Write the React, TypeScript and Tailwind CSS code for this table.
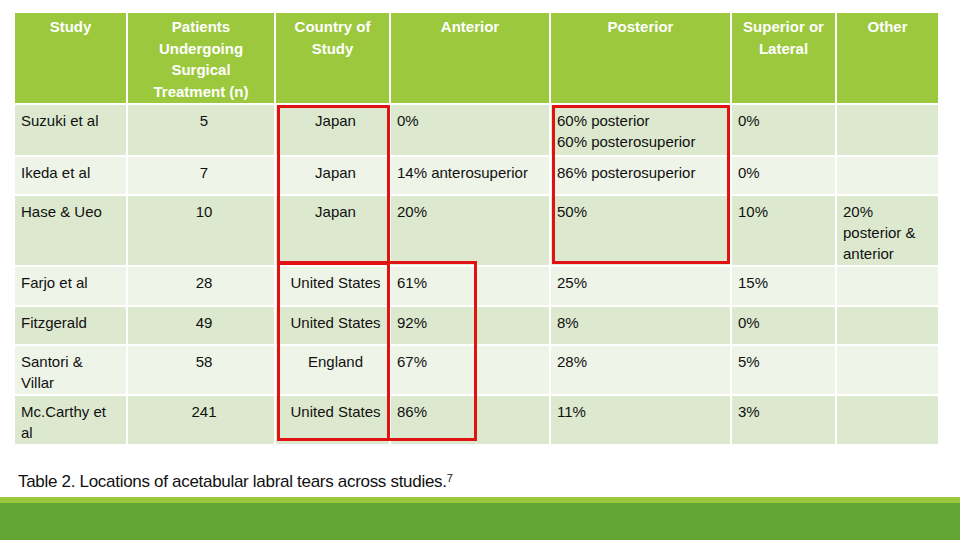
import React from "react";

type Row = {
  study: string;
  n: string;
  country: string;
  anterior: string;
  posterior: string;
  superior: string;
  other: string;
};

const rows: Row[] = [
  { study: "Suzuki et al", n: "5", country: "Japan", anterior: "0%", posterior: "60% posterior\n60% posterosuperior", superior: "0%", other: "" },
  { study: "Ikeda et al", n: "7", country: "Japan", anterior: "14% anterosuperior", posterior: "86% posterosuperior", superior: "0%", other: "" },
  { study: "Hase & Ueo", n: "10", country: "Japan", anterior: "20%", posterior: "50%", superior: "10%", other: "20%\nposterior &\nanterior" },
  { study: "Farjo et al", n: "28", country: "United States", anterior: "61%", posterior: "25%", superior: "15%", other: "" },
  { study: "Fitzgerald", n: "49", country: "United States", anterior: "92%", posterior: "8%", superior: "0%", other: "" },
  { study: "Santori &\nVillar", n: "58", country: "England", anterior: "67%", posterior: "28%", superior: "5%", other: "" },
  { study: "Mc.Carthy et\nal", n: "241", country: "United States", anterior: "86%", posterior: "11%", superior: "3%", other: "" },
];

const headers = [
  "Study",
  "Patients\nUndergoing\nSurgical\nTreatment (n)",
  "Country of\nStudy",
  "Anterior",
  "Posterior",
  "Superior or\nLateral",
  "Other",
];

export default function App() {
  return (
    <div
      className="w-[960px] h-[540px] flex flex-col bg-white overflow-hidden"
      style={{ fontFamily: '"Liberation Sans", Arial, sans-serif' }}
    >
      <div className="pt-[13px] pl-[15px]">
        <div className="relative w-[923px]">
          <div className="grid grid-cols-[111px_146px_113px_158px_179px_103px_101px] grid-rows-[90px_50px_37px_69px_38px_37px_48px_48px] gap-[2px] text-[15px] leading-[21.5px]">
            {headers.map((h) => (
              <div key={h} className="bg-[#9bc83c] text-white font-bold text-center whitespace-pre-line pt-[3px] px-1">
                {h}
              </div>
            ))}
            {rows.map((r, i) => {
              const bg = i % 2 === 0 ? "bg-[#dde9cf]" : "bg-[#eef4e8]";
              const cell = `${bg} text-[#111] whitespace-pre-line pt-[5px] pl-[6px] leading-[21px]`;
              return (
                <React.Fragment key={r.study}>
                  <div className={cell}>{r.study}</div>
                  <div className={`${cell} text-center pl-0`}>{r.n}</div>
                  <div className={`${cell} text-center pl-0`}>{r.country}</div>
                  <div className={cell}>{r.anterior}</div>
                  <div className={cell}>{r.posterior}</div>
                  <div className={cell}>{r.superior}</div>
                  <div className={cell}>{r.other}</div>
                </React.Fragment>
              );
            })}
          </div>
          <div className="absolute left-[262px] top-[92px] w-[113px] h-[160px] border-[3px] border-[#e01212]" />
          <div className="absolute left-[537px] top-[92px] w-[178px] h-[159px] border-[3px] border-[#e01212]" />
          <div className="absolute left-[262px] top-[248px] w-[200px] h-[180px] border-[3px] border-[#e01212]">
            <div className="absolute left-[107px] top-0 bottom-0 w-[3px] bg-[#e01212]" />
          </div>
        </div>
      </div>
      <div className="mt-[28px] pl-[18px] text-[17px] leading-[20px] text-[#111] tracking-[-0.3px]">
        Table 2. Locations of acetabular labral tears across studies.<sup className="text-[11px]">7</sup>
      </div>
      <div className="flex-1" />
      <div className="h-[6px] bg-[#9bc83c]" />
      <div className="h-[37px] bg-[#63a535]" />
    </div>
  );
}
